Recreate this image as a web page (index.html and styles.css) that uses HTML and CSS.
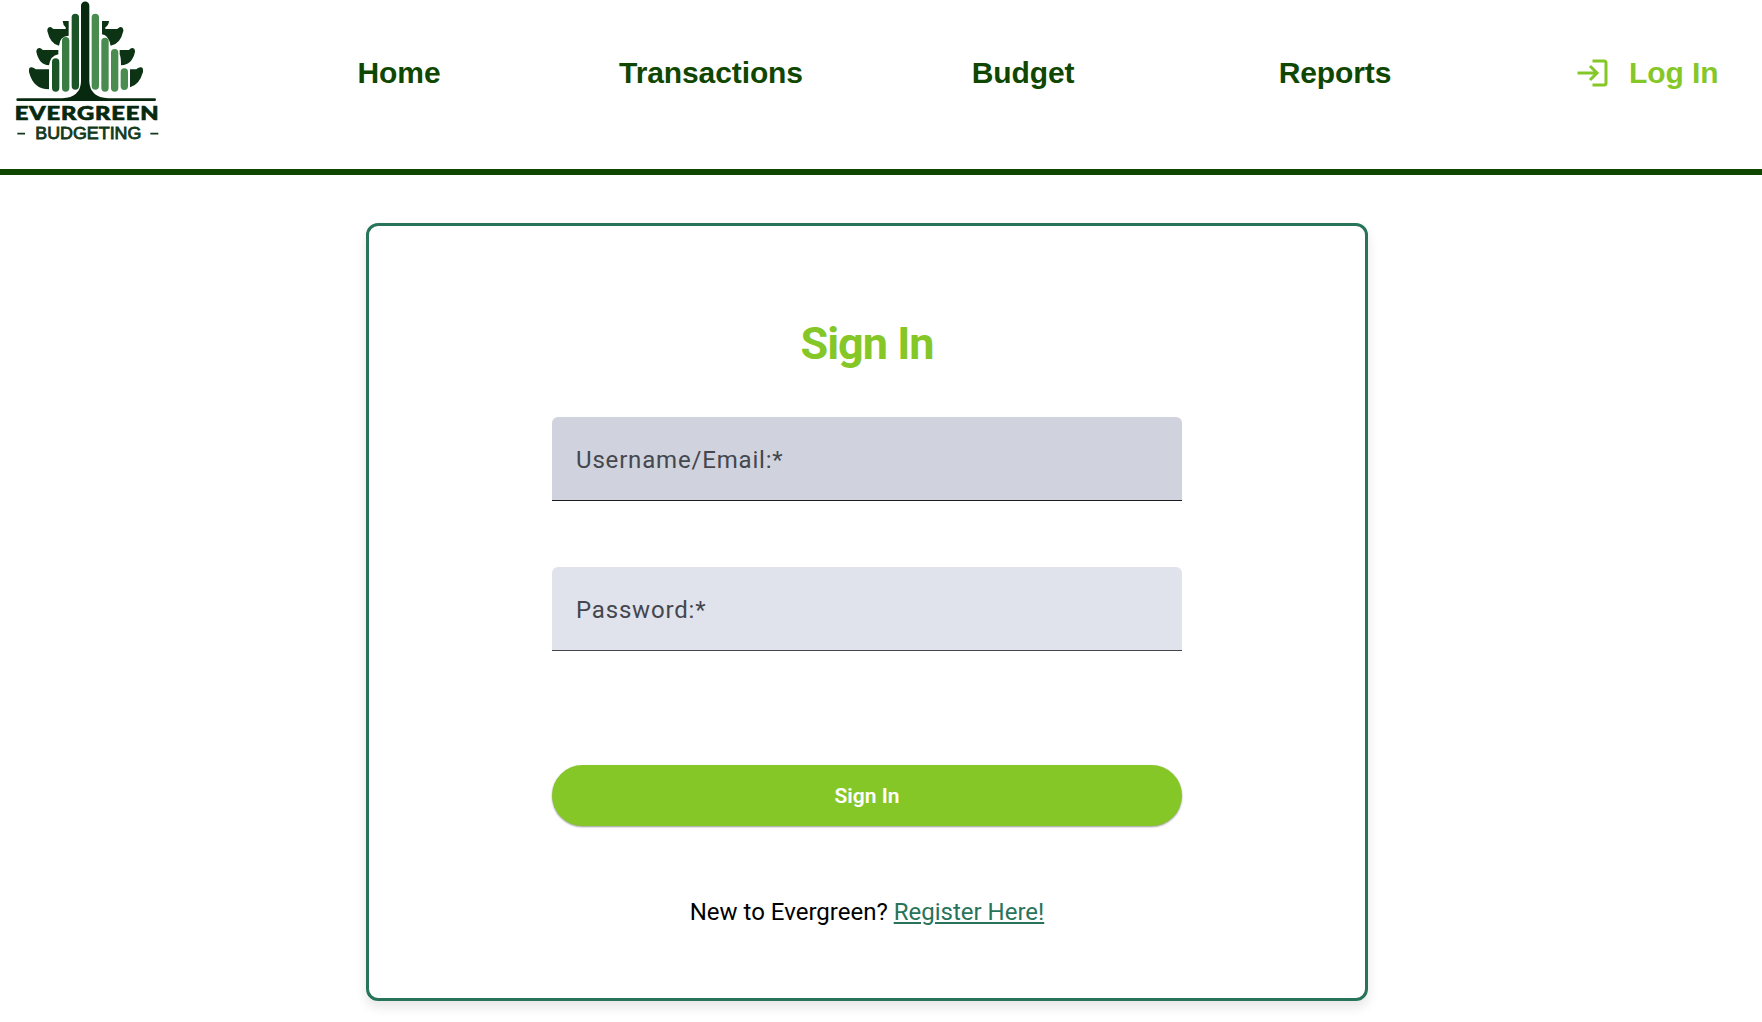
FILE: index.html
```html
<!DOCTYPE html>
<html lang="en">
<head>
<meta charset="utf-8">
<title>Evergreen Budgeting</title>
<link rel="stylesheet" href="styles.css">
</head>
<body>
<header class="site-header">
  <a class="logo" aria-label="Evergreen Budgeting">
    <svg width="180" height="150" viewBox="0 0 540 450">
      <g fill="#0b3314">
        <path d="M87 210Q87 201 95 202Q103 203 107 208H147V268Q100 268 87 216Z"/>
        <path d="M109 152Q111 143 119 144Q125 146 128 150H175V163Q151 167 147 196Q117 194 109 155Z"/>
        <path d="M142 90Q143 81 151 81Q156 82 160 87H197V82Q189 76 188 63H206V107Q180 107 177 137Q151 133 142 93Z"/>
        <path d="M429 210Q429 201 421 202Q413 203 409 208H390V262Q418 255 429 216Z"/>
        <path d="M405 152Q404 143 396 144Q390 146 387 150H359V163Q363 172 363 196Q397 194 405 155Z"/>
        <path d="M370 90Q369 81 361 81Q356 82 352 87H316V82Q326 76 327 63H306V103Q326 105 332 137Q361 133 370 93Z"/>
      </g>
      <path fill="#06290f" d="M243 17a12.500 12.500 0 0 1 25 0V245Q270 291 325 295H464a4 4 0 0 1 0 8H53a4 4 0 0 1 0-8H187Q241 291 243 245Z"/>
      <g fill="none" stroke-width="22" stroke-linecap="round">
        <path stroke="#1b5426" d="M226 52V258M167 186V264"/>
        <path stroke="#3b7c45" d="M197 122V264"/>
        <path stroke="#4a8b50" d="M286 52V258M315 124V264M344 158V264M373 216V259"/>
      </g>
      <text class="logo-name" x="44" y="359" textLength="434" lengthAdjust="spacingAndGlyphs">EVERGREEN</text>
      <text class="logo-sub" x="106" y="416" textLength="318" lengthAdjust="spacingAndGlyphs">BUDGETING</text>
      <path stroke="#12391b" stroke-width="5" d="M52 401H75M451 401H475"/>
    </svg>
  </a>
  <nav class="nav">
    <a>Home</a><a>Transactions</a><a>Budget</a><a>Reports</a>
  </nav>
  <a class="login">
    <svg width="32" height="28" viewBox="0 0 32 28" fill="none" stroke="currentColor" stroke-width="3">
      <path stroke-linejoin="round" d="M15.500 2H27Q29 2 29 4V24Q29 26 27 26H15.500"/>
      <path d="M0.500 14H20M13 7L20 14L13 21"/>
    </svg>
    <span>Log In</span>
  </a>
</header>
<main class="card">
  <h1>Sign In</h1>
  <div class="field active">Username/Email:*</div>
  <div class="field">Password:*</div>
  <button class="submit">Sign In</button>
  <p class="register">New to Evergreen? <a>Register Here!</a></p>
</main>
</body>
</html>
```

FILE: styles.css
```css
* { box-sizing: border-box; }
body { margin: 0; background: #fff; font-family: Roboto, sans-serif; height: 1022px; overflow: hidden; }
.site-header {
  display: flex;
  height: 175px;
  border-bottom: 6px solid #104700;
  font: bold 30px/34px "Liberation Sans", Arial, sans-serif;
  letter-spacing: -.1px;
  color: #104700;
}
.logo { width: 243px; letter-spacing: 0; }
.logo svg { display: block; }
.logo-name { font: 900 57px Lato, sans-serif; letter-spacing: 2px; fill: #06290f; stroke: #06290f; stroke-width: 2px; }
.logo-sub { font: 400 51px "Liberation Sans", sans-serif; fill: #12391b; stroke: #12391b; stroke-width: 2.5px; }
.nav { display: grid; grid-template-columns: repeat(4, 312px); height: 34px; margin-top: 56px; text-align: center; }
.login { display: flex; align-items: center; gap: 20px; height: 34px; margin: 56px 0 0 86px; color: #86c728; }
.login svg { margin-bottom: 1px; }
.card {
  width: 1002px;
  height: 778px;
  margin: 48px 0 0 366px;
  padding: 90px 183px 0;
  border: 3px solid #28745a;
  border-radius: 12px;
  box-shadow: 0 6px 12px rgba(0, 0, 0, .1);
}
h1 { margin: 0 0 45px; font-size: 45px; line-height: 56px; font-weight: 700; letter-spacing: -1px; text-align: center; color: #86c728; }
.field {
  height: 84px;
  margin-bottom: 66px;
  padding: 0 24px;
  border-bottom: 1px solid #44474e;
  border-radius: 6px 6px 0 0;
  background: #e0e2ec;
  color: #44474e;
  font-size: 24px;
  line-height: 87px;
  letter-spacing: .82px;
}
.field.active { background: #d0d2dd; border-bottom-color: #1a1b1f; }
.submit {
  display: block;
  width: 100%;
  height: 61px;
  margin-top: 114px;
  border: 0;
  border-radius: 31px;
  background: #86c728;
  box-shadow: 0 1px 2px rgba(0, 0, 0, .4);
  color: #fff;
  font: 600 21px/61px Roboto, sans-serif;
}
.register { margin: 68px 0 0; font-size: 24px; line-height: 36px; text-align: center; color: #000; }
.register a { color: #28745a; text-decoration: underline; }
```
